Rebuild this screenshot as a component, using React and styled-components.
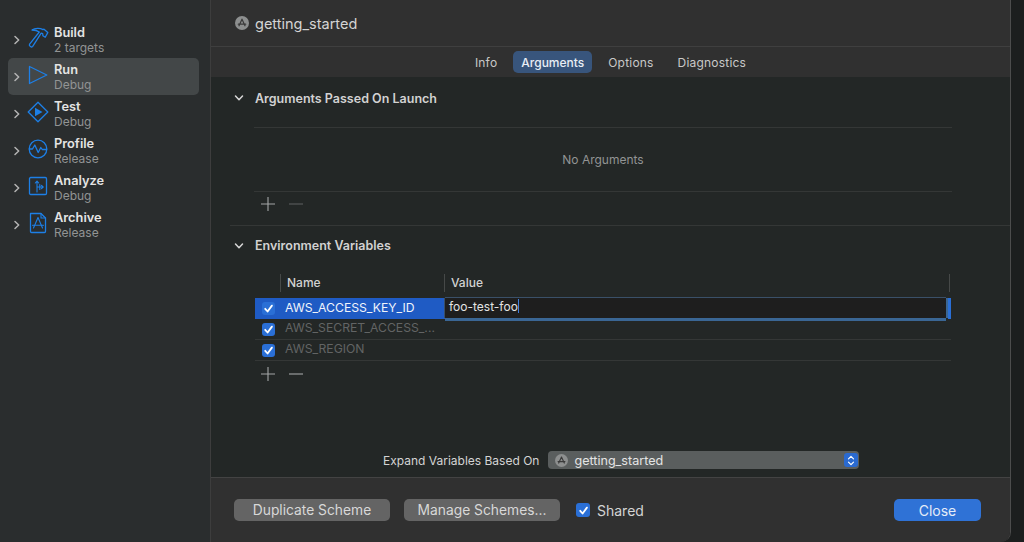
import React from 'react';
import styled, { createGlobalStyle } from 'styled-components';

const GlobalStyle = createGlobalStyle`
  html, body {
    margin: 0;
    padding: 0;
    height: 100%;
    background: #1c1e1e;
  }
  body {
    font-family: Inter, "Liberation Sans", sans-serif;
    font-size: 12px;
    color: #e0e0e0;
    overflow: hidden;
  }
`;

const schemes = [
  { name: 'Build', sub: '2 targets', icon: 'build' },
  { name: 'Run', sub: 'Debug', icon: 'run', selected: true },
  { name: 'Test', sub: 'Debug', icon: 'test' },
  { name: 'Profile', sub: 'Release', icon: 'profile' },
  { name: 'Analyze', sub: 'Debug', icon: 'analyze' },
  { name: 'Archive', sub: 'Release', icon: 'archive' },
];

const envVars = [
  { name: 'AWS_ACCESS_KEY_ID', value: 'foo-test-foo', editing: true },
  { name: 'AWS_SECRET_ACCESS_...' },
  { name: 'AWS_REGION' },
];

const SchemeIcon = ({ type }) => {
  const common = { width: 22, height: 22, viewBox: '0 0 22 22', fill: 'none', stroke: '#1d7fe6', strokeWidth: 1.3, strokeLinejoin: 'round', strokeLinecap: 'round' };
  if (type === 'build') {
    return (
      <svg {...common}>
        <path d="M5 3C8 1 13 .9 16 2.600l1-.4 3.800 3.400-2.600 4.700-2.300-1.600-.2-2-1.500-.5-8.500 13.200c-.5.700-1.300.8-1.900.3l-.9-.7c-.6-.5-.7-1.200-.3-1.800L12.300 5C10.500 3.700 8 3 5 3Z" />
      </svg>
    );
  }
  if (type === 'run') {
    return (
      <svg {...common}>
        <path d="M2.500 2.500 19.800 11 2.500 19.500Z" />
      </svg>
    );
  }
  if (type === 'test') {
    return (
      <svg {...common}>
        <path d="M11 1.200 20.800 11 11 20.800 1.200 11Z" />
        <path d="M8 6.800 15.500 11 8 15.200Z" fill="#1d7fe6" stroke="none" />
      </svg>
    );
  }
  if (type === 'profile') {
    return (
      <svg {...common}>
        <circle cx="11" cy="11" r="8.800" />
        <path d="M2.400 11H5.500L7.800 7l3.400 7.500 2.600-5 1.400 2H19.600" />
      </svg>
    );
  }
  if (type === 'analyze') {
    return (
      <svg {...common}>
        <rect x="2.500" y="2.500" width="17" height="17" rx="1.200" />
        <path d="M10 17V6.500M8.300 8 10 6l1.700 2M10 12h6M14.500 10.300l1.700 1.700-1.700 1.700M12.800 9.500v5" strokeWidth="1.100" />
      </svg>
    );
  }
  return (
    <svg {...common}>
      <path d="M3.500 1.500H14l4.500 4.500v13.400c0 .6-.5 1.100-1.100 1.100H4.600c-.6 0-1.100-.5-1.100-1.100Z" />
      <path d="M14 1.500V6h4.500M11 5.500 6.500 16M11 5.500 15.500 16M5.500 13.200h11" strokeWidth="1.100" />
    </svg>
  );
};

const Chevron = ({ open }) => (
  <svg width="10" height="10" viewBox="0 0 10 10" fill="none" stroke={open ? '#d8d8d8' : '#b4b4b4'} strokeWidth="1.500" strokeLinecap="round" strokeLinejoin="round">
    {open ? <path d="M1.500 3 5 6.700 8.500 3" /> : <path d="M3 1.500 6.700 5 3 8.500" />}
  </svg>
);

const AppGlyph = ({ size }) => (
  <svg width={size} height={size} viewBox="0 0 14 14">
    <circle cx="7" cy="7" r="7" fill="#8d8f8f" />
    <path d="M7 3.200 4 9.800M7 3.200l3 6.600M3.300 8.200h7.400" stroke="#3a3a3a" strokeWidth="1.200" strokeLinecap="round" fill="none" />
  </svg>
);

const CheckMark = () => (
  <svg width="13" height="13" viewBox="0 0 13 13" fill="none" stroke="#fff" strokeWidth="1.800" strokeLinecap="round" strokeLinejoin="round">
    <path d="M3.200 6.800 5.600 9.500 9.900 3.600" />
  </svg>
);

const Plus = () => (
  <svg width="16" height="16" viewBox="0 0 16 16" stroke="#a4a6a6" strokeWidth="1.100">
    <path d="M1 8h14M8 1v14" />
  </svg>
);

const Minus = ({ dim }) => (
  <svg width="16" height="16" viewBox="0 0 16 16" stroke={dim ? '#5c5e5e' : '#a4a6a6'} strokeWidth="1.100">
    <path d="M1 8h14" />
  </svg>
);

const Stepper = () => (
  <svg width="8" height="11" viewBox="0 0 8 11" fill="none" stroke="#fff" strokeWidth="1.200" strokeLinecap="round" strokeLinejoin="round">
    <path d="M1.500 3.800 4 1.300l2.500 2.500M1.500 7.200 4 9.700l2.500-2.500" />
  </svg>
);

export default function App() {
  return (
    <>
      <GlobalStyle />
      <Page>
        <Sidebar>
          {schemes.map(s => (
            <SchemeRow key={s.name} $selected={s.selected}>
              <ChevronSlot><Chevron /></ChevronSlot>
              <IconSlot><SchemeIcon type={s.icon} /></IconSlot>
              <SchemeText>
                <SchemeName>{s.name}</SchemeName>
                <SchemeSub>{s.sub}</SchemeSub>
              </SchemeText>
            </SchemeRow>
          ))}
        </Sidebar>

        <Main>
          <Header>
            <AppGlyph size={14} />
            <HeaderTitle>getting_started</HeaderTitle>
          </Header>

          <Tabs>
            <Tab>Info</Tab>
            <Tab $active>Arguments</Tab>
            <Tab>Options</Tab>
            <Tab>Diagnostics</Tab>
          </Tabs>

          <Content>
            <SectionHead $height={42}>
              <Chevron open />
              <SectionTitle>Arguments Passed On Launch</SectionTitle>
            </SectionHead>
            <EmptyTable>No Arguments</EmptyTable>
            <AddRemove $height={23}>
              <Plus />
              <Minus dim />
            </AddRemove>
            <SectionRule />

            <SectionHead $height={39}>
              <Chevron open />
              <SectionTitle>Environment Variables</SectionTitle>
            </SectionHead>
            <VarHeader>
              <HeaderCell $width={27} />
              <HeaderCell $width={164}>Name</HeaderCell>
              <HeaderCell $width={505}>Value</HeaderCell>
            </VarHeader>
            <VarTable>
              {envVars.map(v => (
                <VarRow key={v.name} $editing={v.editing}>
                  <NameCell $editing={v.editing}>
                    <TableCheck><CheckMark /></TableCheck>
                    <VarName $editing={v.editing}>{v.name}</VarName>
                  </NameCell>
                  {v.editing && (
                    <>
                      <ValueField>{v.value}<Caret /></ValueField>
                      <RowEnd />
                    </>
                  )}
                </VarRow>
              ))}
            </VarTable>
            <AddRemove $height={25}>
              <Plus />
              <Minus />
            </AddRemove>

            <ExpandRow>
              <ExpandLabel>Expand Variables Based On</ExpandLabel>
              <Popup>
                <AppGlyph size={13} />
                <PopupText>getting_started</PopupText>
                <PopupStepper><Stepper /></PopupStepper>
              </Popup>
            </ExpandRow>
          </Content>

          <Footer>
            <FooterButton>Duplicate Scheme</FooterButton>
            <FooterButton>Manage Schemes...</FooterButton>
            <SharedLabel>
              <SharedCheck><CheckMark /></SharedCheck>
              Shared
            </SharedLabel>
            <CloseButton>Close</CloseButton>
          </Footer>
        </Main>
      </Page>
    </>
  );
}

const Page = styled.div`
  display: flex;
  width: 1024px;
  height: 542px;
  overflow: hidden;
  background: #1c1e1e;
`;

const Sidebar = styled.aside`
  width: 211px;
  flex: none;
  box-sizing: border-box;
  padding: 21px 11px 0 8px;
  background: #2a2d2e;
  border-right: 1px solid #3d3d3d;
  display: flex;
  flex-direction: column;
`;

const SchemeRow = styled.div`
  height: 37px;
  display: flex;
  align-items: center;
  border-radius: 5px;
  background: ${props => (props.$selected ? '#434748' : 'transparent')};
`;

const ChevronSlot = styled.span`
  width: 18px;
  padding-left: 4px;
  box-sizing: border-box;
  display: flex;
`;

const IconSlot = styled.span`
  width: 28px;
  display: flex;
  padding-left: 1px;
  margin-bottom: 3px;
  box-sizing: border-box;
`;

const SchemeText = styled.div`
  display: flex;
  flex-direction: column;
`;

const SchemeName = styled.div`
  font-size: 12.800px;
  line-height: 15px;
  font-weight: 600;
  color: #e4e4e4;
`;

const SchemeSub = styled.div`
  font-size: 12px;
  line-height: 15px;
  color: #929494;
`;

const Main = styled.main`
  width: 800px;
  flex: none;
  display: flex;
  flex-direction: column;
  border-right: 1.500px solid #4c4c4c;
  border-bottom-right-radius: 10px;
  box-sizing: border-box;
  overflow: hidden;
`;

const Header = styled.header`
  height: 47px;
  flex: none;
  box-sizing: border-box;
  display: flex;
  align-items: center;
  gap: 6px;
  padding-left: 24px;
  background: #303030;
  border-bottom: 1px solid #3f3f3f;
`;

const HeaderTitle = styled.span`
  font-size: 14.500px;
  line-height: 20px;
  margin-top: 1px;
  color: #d4d4d4;
`;

const Tabs = styled.nav`
  height: 30px;
  flex: none;
  display: flex;
  align-items: center;
  justify-content: center;
  gap: 8px;
  padding-right: 0;
  background: #303030;
`;

const Tab = styled.button`
  border: 0;
  height: 22px;
  padding: 0 8px;
  border-radius: 5px;
  font: inherit;
  font-weight: ${props => (props.$active ? 500 : 400)};
  letter-spacing: ${props => (props.$active ? 0 : 0.2)}px;
  color: ${props => (props.$active ? '#e8eef5' : '#c8c8c8')};
  background: ${props => (props.$active ? '#38557c' : 'transparent')};
`;

const Content = styled.section`
  flex: 1;
  min-height: 0;
  display: flex;
  flex-direction: column;
  background: #232726;
`;

const SectionHead = styled.div`
  height: ${props => props.$height}px;
  flex: none;
  display: flex;
  align-items: center;
  gap: 11px;
  padding-left: 23px;
`;

const SectionTitle = styled.h3`
  margin: 0;
  font-size: 12.500px;
  font-weight: 600;
  color: #d2d2d2;
`;

const EmptyTable = styled.div`
  margin: 8px 0 0 43px;
  width: 698px;
  height: 65px;
  box-sizing: border-box;
  display: flex;
  align-items: center;
  justify-content: center;
  border-top: 1px solid #343736;
  border-bottom: 1px solid #343736;
  color: #929494;
`;

const AddRemove = styled.div`
  height: ${props => props.$height}px;
  flex: none;
  display: flex;
  align-items: center;
  gap: 12px;
  padding-left: 49px;
`;

const SectionRule = styled.hr`
  margin: 10px 0 0 19px;
  height: 1px;
  border: 0;
  background: #343736;
`;

const VarHeader = styled.div`
  height: 22px;
  margin-left: 43px;
  margin-top: 7px;
  display: flex;
  align-items: center;
`;

const HeaderCell = styled.div`
  width: ${props => props.$width}px;
  height: 18px;
  box-sizing: border-box;
  padding-left: 6px;
  line-height: 18px;
  font-weight: 500;
  color: #d2d2d2;
  border-right: 1px solid #464948;
`;

const VarTable = styled.div`
  margin: 4px 0 0 44px;
  width: 696px;
`;

const VarRow = styled.div`
  height: 21px;
  box-sizing: border-box;
  display: flex;
  border-bottom: ${props => (props.$editing ? '0' : '1px solid #343736')};
`;

const NameCell = styled.div`
  width: 190px;
  flex: none;
  display: flex;
  align-items: center;
  padding-left: 7px;
  box-sizing: border-box;
  background: ${props => (props.$editing ? '#1f5bc4' : 'transparent')};
`;

const TableCheck = styled.span`
  width: 13px;
  height: 13px;
  flex: none;
  border-radius: 3px;
  background: #2a6fd6;
  display: flex;
  align-items: center;
  justify-content: center;
`;

const VarName = styled.span`
  margin-left: 10px;
  margin-bottom: ${props => (props.$editing ? 2 : 4)}px;
  font-size: 12.200px;
  white-space: nowrap;
  color: ${props => (props.$editing ? '#f0f4fb' : '#626464')};
`;

const ValueField = styled.div`
  flex: 1;
  height: 20px;
  box-sizing: border-box;
  padding-left: 4px;
  line-height: 18px;
  background: #1e1e1e;
  color: #e4e4e4;
  box-shadow: 0 3px 0 #3a6694, 0 -1px 0 #3a5068, 2px 0 0 #3a6694, -1px 0 0 #3a5068;
`;

const Caret = styled.span`
  display: inline-block;
  width: 1px;
  height: 14px;
  vertical-align: -2px;
  background: #3f7fe0;
`;

const RowEnd = styled.div`
  width: 3px;
  height: 21px;
  margin-left: 2px;
  background: #2a6fd6;
`;

const ExpandRow = styled.div`
  margin-top: auto;
  height: 18px;
  margin-bottom: 8px;
  display: flex;
  align-items: center;
  padding-left: 172px;
`;

const ExpandLabel = styled.span`
  color: #d4d4d4;
`;

const Popup = styled.div`
  width: 311px;
  height: 18px;
  margin-left: 9px;
  box-sizing: border-box;
  border-radius: 4px;
  background: #5a5e5e;
  display: flex;
  align-items: center;
  padding-left: 7px;
  color: #e4e4e4;
`;

const PopupText = styled.span`
  margin-left: 6px;
  font-size: 12.600px;
`;

const PopupStepper = styled.span`
  width: 14px;
  height: 14px;
  margin-left: auto;
  margin-right: 1px;
  border-radius: 3px;
  background: #2a6ad0;
  display: flex;
  align-items: center;
  justify-content: center;
`;

const Footer = styled.footer`
  height: 65px;
  flex: none;
  box-sizing: border-box;
  display: flex;
  align-items: center;
  padding: 0 29px 0 23px;
  background: #303030;
  border-top: 1px solid #434343;
`;

const FooterButton = styled.button`
  width: 156px;
  height: 22px;
  margin-right: 14px;
  padding: 0;
  border: 0;
  border-radius: 5px;
  font: inherit;
  font-size: 13.800px;
  color: #d8d8d8;
  background: #646464;
`;

const SharedLabel = styled.label`
  margin-left: 2px;
  display: flex;
  align-items: center;
  gap: 7px;
  font-size: 14px;
  color: #d4d4d4;
`;

const SharedCheck = styled.span`
  width: 14px;
  height: 14px;
  border-radius: 3px;
  background: #2a6fd6;
  display: flex;
  align-items: center;
  justify-content: center;
`;

const CloseButton = styled.button`
  width: 87px;
  height: 22px;
  margin-left: auto;
  border: 0;
  border-radius: 5px;
  font: inherit;
  font-size: 14px;
  color: #e4ecf8;
  background: #2f72d6;
`;
